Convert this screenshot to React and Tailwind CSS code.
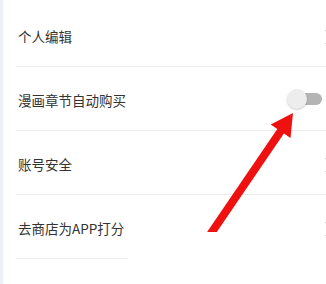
export default function App() {
  const Chevron = () => (
    <svg width="10" height="16" viewBox="0 0 10 16" className="shrink-0 mr-[-8px]" fill="none" stroke="#c8c8c8" strokeWidth="1.2">
      <path d="M1.5 1 L8 8 L1.5 15" />
    </svg>
  );
  const rows = [
    { label: "个人编辑", type: "chev" },
    { label: "漫画章节自动购买", type: "toggle" },
    { label: "账号安全", type: "chev" },
    { label: "去商店为APP打分", type: "chev" },
  ];
  return (
    <div className="relative w-[326px] h-[284px] bg-white overflow-hidden flex font-['Noto_Sans_CJK_SC','Noto_Sans',sans-serif]">
      <div className="w-[3px] bg-[#eef0f8] shrink-0" />
      <div className="flex-1 pt-[3px] min-w-0">
        {rows.map((r) => (
          <div key={r.label} className="h-[64px] ml-[13px] border-b border-[#ececec] flex items-center justify-between pl-[2px] pt-[5px]">
            <span className="text-[13.5px] text-[#333] leading-none">{r.label}</span>
            {r.type === "chev" ? (
              <Chevron />
            ) : (
              <div className="relative w-[36px] h-[20px] mr-[4px] mt-[-5px] shrink-0">
                <div className="absolute right-0 top-[4px] w-[28px] h-[12px] rounded-full bg-[#b4b4b4]" />
                <div className="absolute left-[1px] top-0 w-[20px] h-[20px] rounded-full bg-[#ededed] shadow-[0_1px_2px_rgba(0,0,0,0.2)]" />
              </div>
            )}
          </div>
        ))}
      </div>
      <div className="absolute left-[128px] top-[240px] right-0 bottom-0 bg-white" />
      <svg className="absolute left-0 top-0" width="326" height="284" viewBox="0 0 326 284">
        <polygon
          points="293,113 290.5,138 283.9,133.45 216.8,232 207.1,232 277.3,128.95 270.7,124.5"
          fill="#ef1010"
        />
      </svg>
    </div>
  );
}
